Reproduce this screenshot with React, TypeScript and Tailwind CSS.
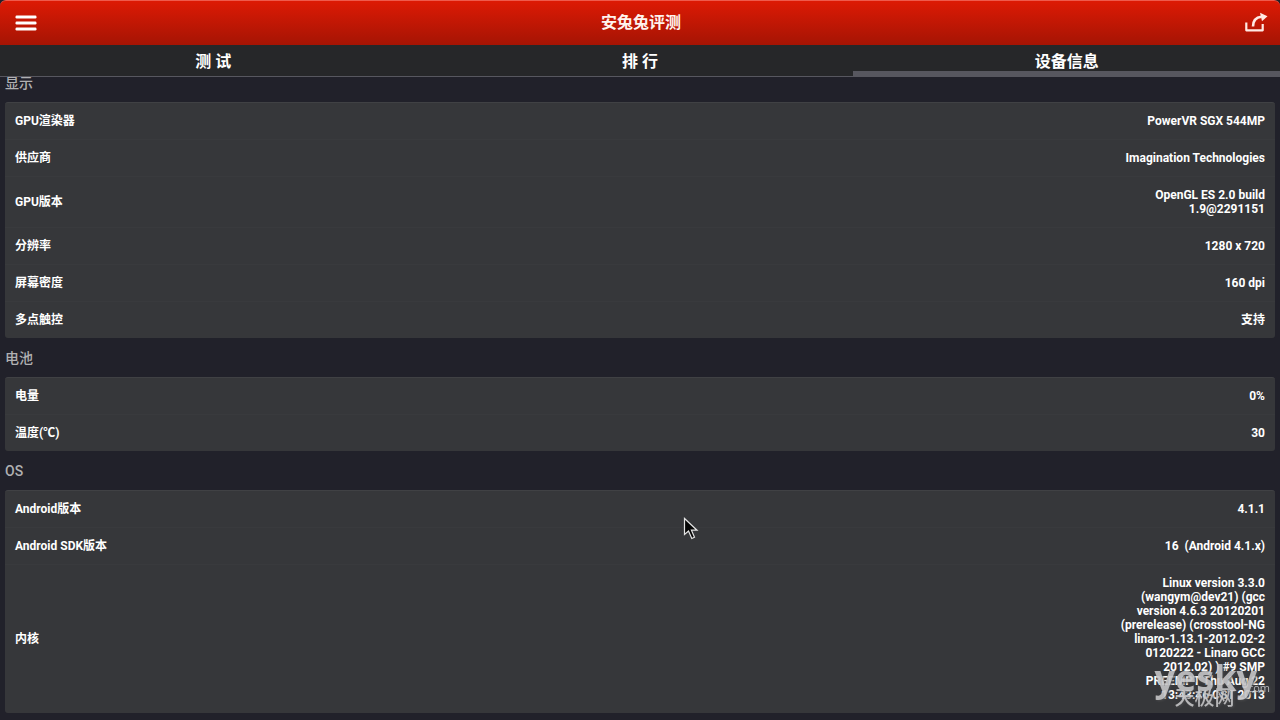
import type { ReactNode } from "react";

type InfoItem = {
  label: string;
  value: string;
};

type InfoSection = {
  title: string;
  items: InfoItem[];
};

const TABS = [
  { id: "test", label: "测 试" },
  { id: "rank", label: "排 行" },
  { id: "device", label: "设备信息" },
];

const SECTIONS: InfoSection[] = [
  {
    title: "显示",
    items: [
      { label: "GPU渲染器", value: "PowerVR SGX 544MP" },
      { label: "供应商", value: "Imagination Technologies" },
      { label: "GPU版本", value: "OpenGL ES 2.0 build\n1.9@2291151" },
      { label: "分辨率", value: "1280 x 720" },
      { label: "屏幕密度", value: "160 dpi" },
      { label: "多点触控", value: "支持" },
    ],
  },
  {
    title: "电池",
    items: [
      { label: "电量", value: "0%" },
      { label: "温度(℃)", value: "30" },
    ],
  },
  {
    title: "OS",
    items: [
      { label: "Android版本", value: "4.1.1" },
      { label: "Android SDK版本", value: "16  (Android 4.1.x)" },
      {
        label: "内核",
        value:
          "Linux version 3.3.0\n(wangym@dev21) (gcc\nversion 4.6.3 20120201\n(prerelease) (crosstool-NG\nlinaro-1.13.1-2012.02-2\n0120222 - Linaro GCC\n2012.02) ) #9 SMP\nPREEMPT Thu Aug 22\n13:43:46 CST 2013",
      },
    ],
  },
];

function IconButton({ label, children }: { label: string; children: ReactNode }) {
  return (
    <button type="button" aria-label={label} className="flex h-full w-11 items-center justify-center">
      {children}
    </button>
  );
}

function Header() {
  return (
    <header className="flex h-[45px] items-center justify-between rounded-t-md border-t border-[#ee5a4c] bg-linear-to-b from-[#dd1a04] to-[#a51404] pr-[2px] pl-1">
      <IconButton label="菜单">
        <svg width="22" height="16" viewBox="0 0 22 16" fill="#fff">
          <rect x="0.5" y="0.5" width="21" height="3" rx="1.2" />
          <rect x="0.5" y="6.5" width="21" height="3" rx="1.2" />
          <rect x="0.5" y="12.5" width="21" height="3" rx="1.2" />
        </svg>
      </IconButton>
      <h1 className="text-base font-bold text-[#fff3ee]">安兔兔评测</h1>
      <IconButton label="分享">
        <svg width="24" height="22" viewBox="0 0 24 22" fill="none">
          <path d="M2.300 10.500V18.300H18.700V12" stroke="#ffeae4" strokeWidth="2.200" strokeLinejoin="round" />
          <path d="M9 14.500C9 9 11.500 5.500 17.500 4.800" stroke="#ffeae4" strokeWidth="2.600" />
          <path d="M16 0.800L23.500 4.200L18 9.300Z" fill="#ffeae4" />
        </svg>
      </IconButton>
    </header>
  );
}

function Tabs({ active }: { active: string }) {
  return (
    <nav className="grid h-8 grid-cols-3 bg-[#262729]">
      {TABS.map((tab) => (
        <button
          key={tab.id}
          type="button"
          className={
            tab.id === active
              ? "border-b-[6px] border-[#57575f] pt-2 text-base leading-[18px] font-bold text-white"
              : "border-b border-[#57575f] pt-[3px] text-base leading-[18px] font-bold text-white"
          }
        >
          {tab.label}
        </button>
      ))}
    </nav>
  );
}

function Section({ title, items }: InfoSection) {
  return (
    <section>
      <h2 className="px-[5px] pt-px text-sm leading-[38px] font-medium text-[#b0b0b2]">{title}</h2>
      <dl className="mx-[5px] overflow-hidden rounded-[3px] border-t border-[#404144] bg-[#36373a]">
        {items.map((item) => (
          <div
            key={item.label}
            className="flex items-center justify-between border-b border-[#393a3d] px-[10px] py-[11px] text-xs leading-[14px] font-bold text-white last:border-b-0"
          >
            <dt>{item.label}</dt>
            <dd className="text-right whitespace-pre">{item.value}</dd>
          </div>
        ))}
      </dl>
    </section>
  );
}

function Watermark() {
  return (
    <div className="pointer-events-none absolute right-[10px] bottom-[14px] flex flex-col text-[#c4c4c6] opacity-90 drop-shadow-[1px_1px_1px_#4a4a4c]">
      <div className="flex items-end font-['Open_Sans',sans-serif]">
        <span className="text-4xl leading-8 font-bold">yesky</span>
        <span className="-ml-3 text-[11px] leading-3">.com</span>
      </div>
      <span className="-mt-1 pl-5 text-xl leading-4 font-medium">天极网</span>
    </div>
  );
}

function Cursor() {
  return (
    <svg className="pointer-events-none absolute top-[517px] left-[683px]" width="16" height="24" viewBox="0 0 16 24">
      <path
        d="M1.500 1.500V17.500L5.500 14L8.800 21.500L11.500 20.300L8.400 13.200H14Z"
        fill="#050505"
        stroke="#e4e4e4"
        strokeWidth="1.200"
      />
    </svg>
  );
}

export default function App() {
  return (
    <div className="relative flex h-screen flex-col overflow-hidden bg-[#21212a] font-[Roboto,'Noto_Sans_CJK_SC',sans-serif]">
      <Header />
      <Tabs active="device" />
      <main className="flex-1 overflow-hidden">
        {/* list is scrolled slightly, the first title sits under the tabs */}
        <div className="-mt-[14px]">
          {SECTIONS.map((section) => (
            <Section key={section.title} {...section} />
          ))}
        </div>
      </main>
      <Watermark />
      <Cursor />
    </div>
  );
}
